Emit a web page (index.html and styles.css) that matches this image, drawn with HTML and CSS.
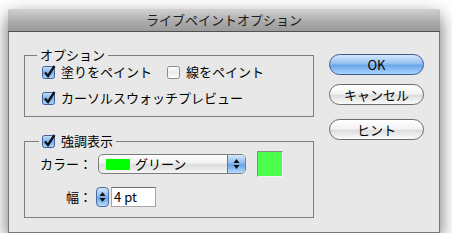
FILE: index.html
```html
<!DOCTYPE html>
<html lang="ja">

<head>
   <meta charset="UTF-8">
   <meta name="viewport" content="width=device-width, initial-scale=1.0">
   <link rel="stylesheet" href="styles.css">
   <title>ライブペイントオプション</title>
</head>

<body>
   <div class="window">
      <div class="titlebar">ライブペイントオプション</div>

      <div class="content">
         <div class="groups">
            <fieldset class="group group-options">
               <legend>オプション</legend>
               <div class="row">
                  <label class="check">
                     <svg class="box" width="14" height="14" viewBox="0 0 14 14">
                        <defs>
                           <linearGradient id="blue1" x1="0" y1="0" x2="0" y2="1">
                              <stop offset="0" stop-color="#c9e0f8"/>
                              <stop offset="0.5" stop-color="#7fb1ea"/>
                              <stop offset="1" stop-color="#a9d3fb"/>
                           </linearGradient>
                        </defs>
                        <rect x="0.5" y="1.5" width="12" height="12" rx="2" fill="url(#blue1)" stroke="#40629a"/>
                        <path d="M3 7.5 L6 11 L12.5 1" fill="none" stroke="#111" stroke-width="2.3"/>
                     </svg>
                     塗りをペイント
                  </label>
                  <label class="check">
                     <svg class="box" width="14" height="14" viewBox="0 0 14 14">
                        <defs>
                           <linearGradient id="white1" x1="0" y1="0" x2="0" y2="1">
                              <stop offset="0" stop-color="#ffffff"/>
                              <stop offset="0.5" stop-color="#ececec"/>
                              <stop offset="1" stop-color="#ffffff"/>
                           </linearGradient>
                        </defs>
                        <rect x="0.5" y="1.5" width="12" height="12" rx="2" fill="url(#white1)" stroke="#8a8a8a"/>
                     </svg>
                     線をペイント
                  </label>
               </div>
               <div class="row">
                  <label class="check">
                     <svg class="box" width="14" height="14" viewBox="0 0 14 14">
                        <rect x="0.5" y="1.5" width="12" height="12" rx="2" fill="url(#blue1)" stroke="#40629a"/>
                        <path d="M3 7.5 L6 11 L12.5 1" fill="none" stroke="#111" stroke-width="2.3"/>
                     </svg>
                     カーソルスウォッチプレビュー
                  </label>
               </div>
            </fieldset>

            <fieldset class="group group-highlight">
               <legend>
                  <label class="check">
                     <svg class="box" width="14" height="14" viewBox="0 0 14 14">
                        <rect x="0.5" y="1.5" width="12" height="12" rx="2" fill="url(#blue1)" stroke="#40629a"/>
                        <path d="M3 7.5 L6 11 L12.5 1" fill="none" stroke="#111" stroke-width="2.3"/>
                     </svg>
                     強調表示
                  </label>
               </legend>
               <div class="field-grid">
                  <span class="field-label">カラー：</span>
                  <div class="color-row">
                     <div class="popup">
                        <span class="popup-swatch"></span>
                        <span class="popup-text">グリーン</span>
                        <span class="popup-arrows">
                           <svg width="7" height="12" viewBox="0 0 7 12">
                              <path d="M3.5 1 L6.5 5 L0.5 5 Z M3.5 11 L6.5 7 L0.5 7 Z" fill="#111"/>
                           </svg>
                        </span>
                     </div>
                     <div class="swatch"></div>
                  </div>

                  <span class="field-label">幅：</span>
                  <div class="width-row">
                     <span class="stepper">
                        <svg width="7" height="12" viewBox="0 0 7 12">
                           <path d="M3.5 1 L6.5 5 L0.5 5 Z M3.5 11 L6.5 7 L0.5 7 Z" fill="#111"/>
                        </svg>
                     </span>
                     <span class="text-field">4 pt</span>
                  </div>
               </div>
            </fieldset>
         </div>

         <div class="buttons">
            <button class="btn btn-default">OK</button>
            <button class="btn">キャンセル</button>
            <button class="btn btn-hint">ヒント</button>
         </div>
      </div>
   </div>
</body>

</html>
```

FILE: styles.css
```css
* {
   box-sizing: border-box;
}

body {
   margin: 0;
   padding: 9px 0 0 8px;
   background-color: #fff;
   font-family: "Noto Sans CJK JP", sans-serif;
   font-size: 13px;
   color: #000;
}

.window {
   width: 432px;
   height: 224px;
   display: flex;
   flex-direction: column;
   background-color: #e8e8e8;
   border: 1px solid #777;
   border-top: none;
   border-radius: 4px 4px 0 0;
   box-shadow: 0 7px 18px rgba(0, 0, 0, 0.6);
}

.titlebar {
   height: 23px;
   margin: 0 -1px;
   line-height: 22px;
   text-align: center;
   color: #1c1c1c;
   background: linear-gradient(#d2d2d2, #a9a9a9 60%, #9b9b9b);
   border-bottom: 1px solid #505050;
   border-radius: 4px 4px 0 0;
}

.content {
   display: flex;
   gap: 15px;
   padding: 0 15px;
}

.groups {
   padding-top: 15px;
   display: flex;
   flex-direction: column;
   gap: 16px;
}

.group {
   width: 290px;
   margin: 0;
   min-width: 0;
   border: 1px solid #7e7e7e;
}

.group legend {
   padding: 0 3px;
   line-height: 16px;
}

.group-options {
   padding: 0 0 9px 12px;
}

.group-options .row {
   display: flex;
   gap: 15px;
   margin-left: 5px;
   line-height: 18px;
}

.group-options .row + .row {
   margin-top: 8px;
}

.group-highlight {
   padding: 2px 0 10px 14px;
}

.check {
   display: flex;
   align-items: center;
   gap: 5px;
}

.box {
   display: block;
   flex: none;
   overflow: visible;
}

.field-grid {
   display: grid;
   grid-template-columns: 53px auto;
   row-gap: 10px;
   align-items: center;
}

.field-label {
   text-align: right;
   line-height: 18px;
}

.color-row {
   display: flex;
   align-items: center;
   gap: 11px;
   margin-left: 6px;
}

.popup {
   width: 148px;
   height: 20px;
   display: flex;
   align-items: center;
   padding-left: 7px;
   border: 1px solid #7c7c7c;
   border-radius: 5px;
   background: linear-gradient(#ffffff, #f1f1f1 45%, #dcdcdc 55%, #f7f7f7);
   overflow: hidden;
}

.popup-swatch {
   width: 24px;
   height: 11px;
   background-color: #00ff00;
}

.popup-text {
   margin-left: 5px;
   flex: 1;
   line-height: 18px;
}

.popup-arrows {
   width: 18px;
   height: 100%;
   display: flex;
   align-items: center;
   justify-content: center;
   border-left: 1px solid #5478b0;
   background: linear-gradient(#d4e7fb, #8dbcef 45%, #6aa4e6 55%, #b5dbff);
}

.swatch {
   width: 26px;
   height: 26px;
   background-color: #4cff4c;
   border: 1px solid #f4f4f4;
   border-top-color: #8a8a8a;
   border-left-color: #8a8a8a;
}

.width-row {
   display: flex;
   align-items: center;
   gap: 2px;
   margin-left: 4px;
}

.stepper {
   width: 13px;
   height: 20px;
   display: flex;
   align-items: center;
   justify-content: center;
   border: 1px solid #4a6ea8;
   border-radius: 4px;
   background: linear-gradient(#d4e7fb, #8dbcef 45%, #6aa4e6 55%, #b5dbff);
}

.text-field {
   width: 45px;
   height: 20px;
   padding-left: 2px;
   line-height: 18px;
   background-color: #fff;
   border: 1px solid #a6a6a6;
   border-top-color: #6e6e6e;
}

.buttons {
   padding-top: 22px;
   display: flex;
   flex-direction: column;
   width: 95px;
}

.btn {
   height: 21px;
   padding: 0;
   font-family: inherit;
   font-size: 13px;
   line-height: 19px;
   color: #000;
   border: 1px solid #6a6a6a;
   border-radius: 11px;
   background: linear-gradient(#ffffff, #f3f3f3 45%, #dedede 55%, #fafafa);
}

.btn + .btn {
   margin-top: 9px;
}

.btn-default {
   border-color: #3a5a92;
   background: linear-gradient(#d6e8fb, #93c0f0 45%, #6ba6ea 55%, #aad6ff);
}

.btn.btn-hint {
   margin-top: 14px;
}
```
